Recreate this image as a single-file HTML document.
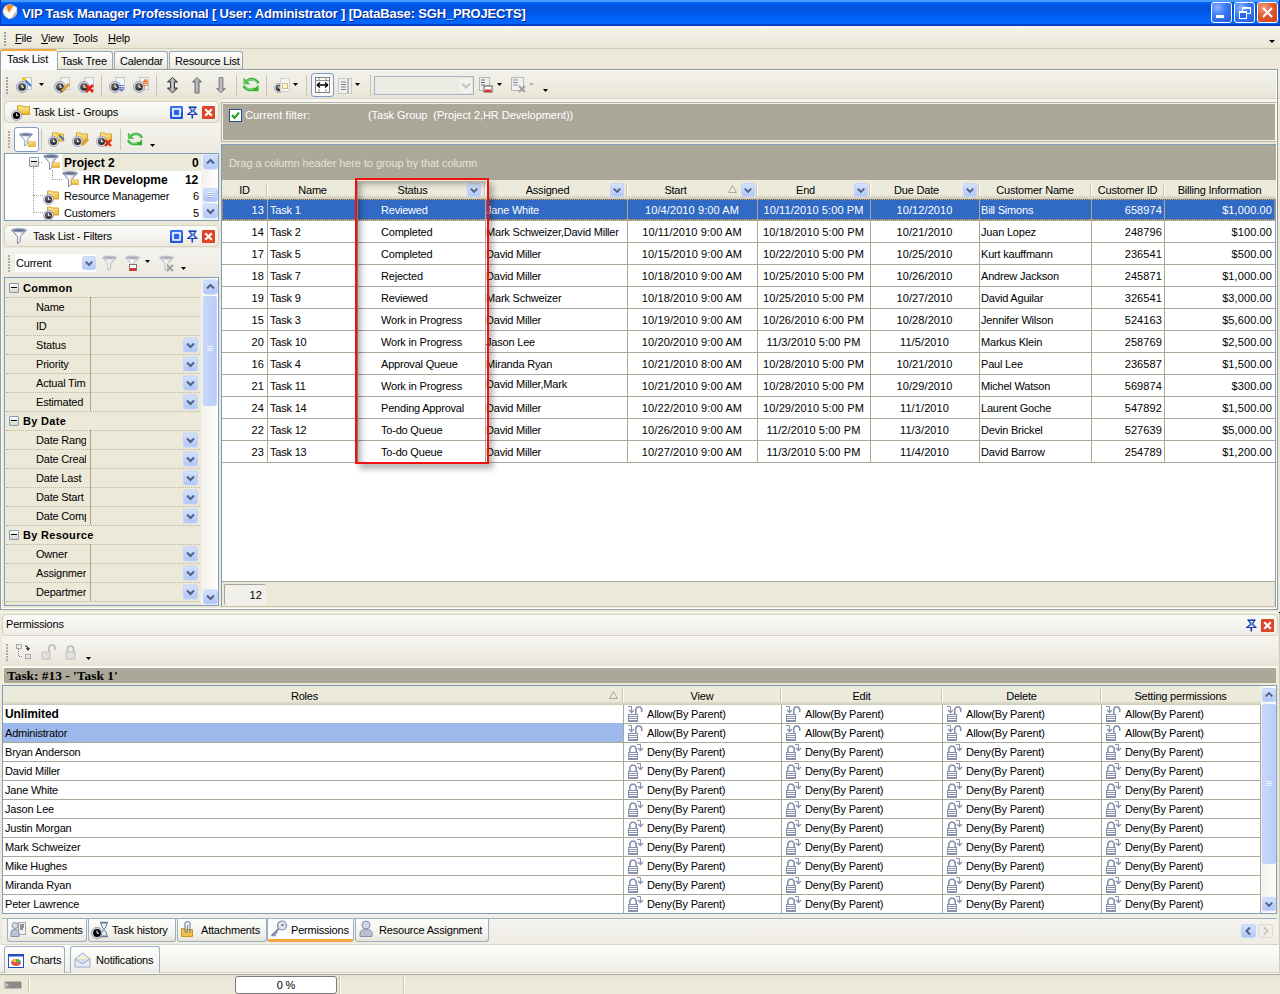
<!DOCTYPE html><html><head><meta charset="utf-8"><style>
*{margin:0;padding:0;box-sizing:border-box}
html,body{width:1280px;height:994px;overflow:hidden}
body{position:relative;background:#ECE9D8;font-family:"Liberation Sans",sans-serif;font-size:11px;color:#000;letter-spacing:-0.2px}
.t{position:absolute;white-space:nowrap;line-height:13px}
.a{position:absolute}
svg{position:absolute;overflow:visible}
</style></head><body>
<div style="position:absolute;left:0px;top:0px;width:1280px;height:26px;background:linear-gradient(to bottom,#4A9BFF 0px,#4696FF 2px,#0A6CFF 2px,#0060F0 3px,#0056E2 5px,#0053DF 8px,#0056E6 12px,#005FF4 16px,#0065FD 20px,#0066FF 24px,#0040CC 24px,#0038C0 26px)"></div>
<div style="position:absolute;left:1279px;top:0px;width:1px;height:26px;background:#0036B8"></div>
<div style="position:absolute;left:0px;top:0px;width:1px;height:26px;background:#0040C8"></div>
<svg style="left:0px;top:0px" width="20" height="20"><defs><clipPath id="icc"><circle cx="10" cy="11.5" r="7"/></clipPath></defs><circle cx="10" cy="11.5" r="7" fill="#F2F2F2" stroke="#E8B070" stroke-width="0.6"/><g clip-path="url(#icc)"><path d="M2 3 H14 L9 12 L2 7 Z" fill="#F6D6AE"/><path d="M6.5 5.5 L14 4.5 L9 12.5 Z" fill="#EE8A1C"/><path d="M10.5 19 L18 9.5 V19 Z" fill="#B0B0B0"/></g><path d="M3.8 10.2 L9 16.8 L16.2 7.2" stroke="#fff" stroke-width="3" fill="none"/></svg>
<div class="t" style="left:22px;top:6px;font-weight:bold;font-size:13px;line-height:15px;color:#fff;letter-spacing:-0.18px;text-shadow:1px 1px 0 #0A1E80">VIP Task Manager Professional [ User: Administrator ] [DataBase: SGH_PROJECTS]</div>
<div style="position:absolute;left:1211px;top:2px;width:21px;height:21px;border:1px solid #fff;border-radius:3px;background:radial-gradient(circle at 30% 25%,#8FB4FF 0%,#3C7DF8 40%,#2257E0 100%)"></div>
<div style="position:absolute;left:1216px;top:15px;width:8px;height:3px;background:#fff"></div>
<div style="position:absolute;left:1234px;top:2px;width:21px;height:21px;border:1px solid #fff;border-radius:3px;background:radial-gradient(circle at 30% 25%,#8FB4FF 0%,#3C7DF8 40%,#2257E0 100%)"></div>
<svg style="left:1238px;top:6px" width="14" height="14"><rect x="4.5" y="1.5" width="8" height="6" fill="none" stroke="#fff" stroke-width="1"/><rect x="4" y="1" width="9" height="2" fill="#fff"/><rect x="1.5" y="5.5" width="7" height="7" fill="#2E66E8" stroke="#fff" stroke-width="1"/><rect x="1" y="5" width="8" height="2" fill="#fff"/></svg>
<div style="position:absolute;left:1257px;top:2px;width:21px;height:21px;border:1px solid #fff;border-radius:3px;background:radial-gradient(circle at 30% 25%,#F0A080 0%,#E25A30 45%,#C8401A 100%)"></div>
<svg style="left:1261px;top:6px" width="14" height="14"><path d="M2 2 L11 11 M11 2 L2 11" stroke="#fff" stroke-width="2"/></svg>
<div style="position:absolute;left:0px;top:26px;width:1280px;height:23px;background:linear-gradient(to bottom,#F5F4EC,#EEEBDF 70%,#E7E3D1)"></div>
<div style="position:absolute;left:0px;top:48px;width:1280px;height:1px;background:#D0CCBA"></div>
<div style="position:absolute;left:4px;top:32px;width:2px;height:2px;background:#A8A49A"></div>
<div style="position:absolute;left:4px;top:35px;width:2px;height:2px;background:#A8A49A"></div>
<div style="position:absolute;left:4px;top:38px;width:2px;height:2px;background:#A8A49A"></div>
<div style="position:absolute;left:4px;top:41px;width:2px;height:2px;background:#A8A49A"></div>
<div style="position:absolute;left:4px;top:44px;width:2px;height:2px;background:#A8A49A"></div>
<div class="t" style="left:15px;top:32px;"><u>F</u>ile</div>
<div class="t" style="left:41px;top:32px;"><u>V</u>iew</div>
<div class="t" style="left:73px;top:32px;"><u>T</u>ools</div>
<div class="t" style="left:108px;top:32px;"><u>H</u>elp</div>
<svg style="left:1269px;top:40px" width="7" height="4"><path d="M0 0 H6 L3 3 Z" fill="#000"/></svg>
<div style="position:absolute;left:0px;top:49px;width:1280px;height:22px;background:#ECE9D8"></div>
<div style="position:absolute;left:0px;top:49px;width:57px;height:22px;background:#FCFCFE;border-left:1px solid #919B9C;border-top:2px solid #F1A640;border-radius:3px 3px 0 0"></div><div class="t" style="left:7px;top:53px;">Task List</div>
<div style="position:absolute;left:57px;top:51px;width:56px;height:19px;background:linear-gradient(to bottom,#FEFEFE,#F1F0EA 60%,#E4E2D6);border:1px solid #97A5B5;border-bottom:none;border-radius:3px 3px 0 0"></div><div class="t" style="left:61px;top:55px;">Task Tree</div>
<div style="position:absolute;left:114px;top:51px;width:54px;height:19px;background:linear-gradient(to bottom,#FEFEFE,#F1F0EA 60%,#E4E2D6);border:1px solid #97A5B5;border-bottom:none;border-radius:3px 3px 0 0"></div><div class="t" style="left:120px;top:55px;">Calendar</div>
<div style="position:absolute;left:169px;top:51px;width:74px;height:19px;background:linear-gradient(to bottom,#FEFEFE,#F1F0EA 60%,#E4E2D6);border:1px solid #97A5B5;border-bottom:none;border-radius:3px 3px 0 0"></div><div class="t" style="left:175px;top:55px;">Resource List</div>
<div style="position:absolute;left:0px;top:70px;width:1280px;height:29px;background:linear-gradient(to bottom,#F2F1EA,#EEECE2 55%,#E7E4D4)"></div>
<div style="position:absolute;left:0px;top:98px;width:1280px;height:1px;background:#D8D4C4"></div>
<div style="position:absolute;left:0px;top:99px;width:1280px;height:3px;background:#F7F6F1"></div>
<div style="position:absolute;left:6px;top:77px;width:2px;height:2px;background:#A8A49A"></div>
<div style="position:absolute;left:6px;top:80px;width:2px;height:2px;background:#A8A49A"></div>
<div style="position:absolute;left:6px;top:83px;width:2px;height:2px;background:#A8A49A"></div>
<div style="position:absolute;left:6px;top:86px;width:2px;height:2px;background:#A8A49A"></div>
<div style="position:absolute;left:6px;top:89px;width:2px;height:2px;background:#A8A49A"></div>
<div style="position:absolute;left:6px;top:92px;width:2px;height:2px;background:#A8A49A"></div>
<div style="position:absolute;left:101px;top:75px;width:1px;height:21px;background:#C9C5B2"></div>
<div style="position:absolute;left:156px;top:75px;width:1px;height:21px;background:#C9C5B2"></div>
<div style="position:absolute;left:236px;top:75px;width:1px;height:21px;background:#C9C5B2"></div>
<div style="position:absolute;left:266px;top:75px;width:1px;height:21px;background:#C9C5B2"></div>
<div style="position:absolute;left:306px;top:75px;width:1px;height:21px;background:#C9C5B2"></div>
<div style="position:absolute;left:370px;top:75px;width:1px;height:21px;background:#C9C5B2"></div>
<svg width="0" height="0" style="position:absolute"><defs>
<radialGradient id="gclk" cx="0.4" cy="0.35" r="0.7"><stop offset="0" stop-color="#707070"/><stop offset="1" stop-color="#1A1A1A"/></radialGradient>
<linearGradient id="gfold" x1="0" y1="0" x2="0" y2="1"><stop offset="0" stop-color="#FFE9A0"/><stop offset="1" stop-color="#E8B830"/></linearGradient>
<linearGradient id="gfun" x1="0" y1="0" x2="1" y2="0"><stop offset="0" stop-color="#C8D0E0"/><stop offset="0.45" stop-color="#FFFFFF"/><stop offset="1" stop-color="#B0B8CC"/></linearGradient>
<linearGradient id="gdd" x1="0" y1="0" x2="0" y2="1"><stop offset="0" stop-color="#D6E2FC"/><stop offset="1" stop-color="#AFC6F6"/></linearGradient>
<linearGradient id="garr" x1="0" y1="0" x2="1" y2="0"><stop offset="0" stop-color="#5A5A5A"/><stop offset="0.5" stop-color="#C8C8C8"/><stop offset="1" stop-color="#4A4A4A"/></linearGradient>
<symbol id="clock" viewBox="0 0 12 12"><circle cx="6" cy="6" r="5.5" fill="#D8DCE6" stroke="#9AA0B8" stroke-width="1"/><circle cx="6" cy="6" r="3.8" fill="url(#gclk)"/><path d="M6 3.5 V6.2 H8" stroke="#fff" stroke-width="1" fill="none"/></symbol>
<symbol id="clockb" viewBox="0 0 12 12"><circle cx="6" cy="6" r="5.5" fill="#D8DCE6" stroke="#9AA0B8" stroke-width="1"/><circle cx="6" cy="6" r="3.9" fill="#000"/><path d="M6 3.5 V6.2 H8" stroke="#fff" stroke-width="1" fill="none"/></symbol>
<symbol id="folder" viewBox="0 0 12 10"><path d="M0.5 1.5 H4.5 L5.5 2.5 H11.5 V9.5 H0.5 Z" fill="url(#gfold)" stroke="#D9A520" stroke-width="1"/></symbol>
<symbol id="doc" viewBox="0 0 10 13"><rect x="0.5" y="0.5" width="9" height="12" fill="#F4F4F4" stroke="#C8C8C8"/></symbol>
<symbol id="funnel" viewBox="0 0 16 16"><path d="M0.8 2.2 L6.5 8.8 V15.5 L9.2 13.5 V8.8 L15.2 2.2 Z" fill="url(#gfun)" stroke="#6E7C9C" stroke-width="0.9"/><path d="M7.6 9 V14" stroke="#FFFFFF" stroke-width="0.9"/><ellipse cx="8" cy="2.2" rx="7.3" ry="1.6" fill="#9AA4BC" stroke="#6E7C9C" stroke-width="0.6"/><ellipse cx="8" cy="2.4" rx="5" ry="0.8" fill="#5E6A88"/></symbol>
<symbol id="dd" viewBox="0 0 15 15"><rect x="0.5" y="0.5" width="14" height="14" rx="2" fill="url(#gdd)" stroke="#C3D3FD"/><path d="M4 6 L7.5 9.5 L11 6" stroke="#4D6185" stroke-width="2" fill="none"/></symbol>
<symbol id="ddu" viewBox="0 0 15 15"><rect x="0.5" y="0.5" width="14" height="14" rx="2" fill="url(#gdd)" stroke="#C3D3FD"/><path d="M4 9 L7.5 5.5 L11 9" stroke="#4D6185" stroke-width="2" fill="none"/></symbol>
<symbol id="refresh" viewBox="0 0 17 17"><path d="M15.8 7.2 A7 6.2 0 0 0 4.5 4.8" stroke="#30B030" stroke-width="2.6" fill="none"/><path d="M15 6.6 A7 6.2 0 0 0 5.5 4.2" stroke="#A8EAA8" stroke-width="0.7" fill="none"/><path d="M1 1.8 V8.2 H7.4 Z" fill="#30B030"/><path d="M2 4.5 V7.2 H4.7" stroke="#A8EAA8" stroke-width="0.7" fill="none"/><path d="M1.2 9.8 A7 6.2 0 0 0 12.5 12.2" stroke="#30B030" stroke-width="2.6" fill="none"/><path d="M2 10.4 A7 6.2 0 0 0 11.5 12.8" stroke="#A8EAA8" stroke-width="0.7" fill="none"/><path d="M16 8.8 V15.2 H9.6 Z" fill="#30B030"/></symbol>
<symbol id="xred" viewBox="0 0 12 12"><rect x="0" y="0" width="12" height="12" rx="1.5" fill="#E0462A" stroke="#C43A20" stroke-width="0.5"/><path d="M3 3 L9 9 M9 3 L3 9" stroke="#fff" stroke-width="2"/></symbol>
<symbol id="bsq" viewBox="0 0 13 13"><rect x="0" y="0" width="13" height="13" rx="1.5" fill="#1D54E4"/><rect x="0.5" y="0.5" width="12" height="6" rx="1" fill="#3C78F4"/><rect x="3" y="3" width="7" height="7" fill="#2A64EC" stroke="#fff" stroke-width="1.6"/></symbol>
<symbol id="pin" viewBox="0 0 12 13"><path d="M2.5 1.2 H10.5" stroke="#1C3CB8" stroke-width="1.6"/><path d="M3.5 1.5 L6 5.2 L1.5 8.5 H11 L7.5 5.2 L9.5 1.5 Z" fill="#D8E2FA" stroke="#1C3CB8" stroke-width="1.2" stroke-linejoin="round"/><circle cx="7" cy="4.5" r="1.2" fill="#4A8AE0"/><path d="M6.3 8.5 V12.5" stroke="#1C3CB8" stroke-width="1.6"/></symbol>
<symbol id="lockopen" viewBox="0 0 16 16"><rect x="0" y="8" width="10" height="8" fill="#8790AC"/><rect x="1" y="9" width="8" height="1" fill="#fff"/><rect x="1" y="11" width="8" height="1" fill="#fff"/><rect x="1" y="13" width="8" height="1" fill="#fff"/><path d="M7.8 8 V3 L9.3 1 H12.2 L13.7 3 V6" stroke="#8790AC" stroke-width="1.6" fill="none"/><path d="M0 0.5 H3.5 V6" stroke="#8790AC" stroke-width="1" fill="none"/><path d="M1 4 L3.5 6.5 L6 4" stroke="#8790AC" stroke-width="1.3" fill="none"/></symbol>
<symbol id="lockdeny" viewBox="0 0 16 16"><rect x="0" y="8" width="10" height="8" fill="#8790AC"/><rect x="1" y="9" width="8" height="1" fill="#fff"/><rect x="1" y="11" width="8" height="1" fill="#fff"/><rect x="1" y="13" width="8" height="1" fill="#fff"/><path d="M1.8 8 V4.5 L3.5 2.3 H6.5 L8.2 4.5 V8" stroke="#8790AC" stroke-width="1.6" fill="none"/><path d="M9 0.5 H12.5 V6.5" stroke="#8790AC" stroke-width="1" fill="none"/><path d="M10 4 L12.5 6.5 L15 4" stroke="#8790AC" stroke-width="1.3" fill="none"/></symbol>
</defs></svg>
<svg style="left:22px;top:77px;" width="10" height="13"><use href="#doc" width="10" height="13"/></svg><svg style="left:16px;top:81px;" width="12" height="12"><use href="#clock" width="12" height="12"/></svg>
<svg style="left:22px;top:77px" width="10" height="10"><path d="M1 1 L9 9" stroke="#3A78D8" stroke-width="2"/><circle cx="2" cy="2" r="2" fill="#F8D020"/></svg>
<svg style="left:39px;top:83px" width="6" height="4"><path d="M0 0 H5 L2.5 3 Z" fill="#000"/></svg>
<svg style="left:60px;top:77px;" width="10" height="13"><use href="#doc" width="10" height="13"/></svg><svg style="left:54px;top:81px;" width="12" height="12"><use href="#clock" width="12" height="12"/></svg>
<svg style="left:60px;top:83px" width="10" height="10"><path d="M9 1 L2 8" stroke="#E0A030" stroke-width="3"/><path d="M2 8 L1 9" stroke="#333" stroke-width="1.5"/></svg>
<svg style="left:84px;top:77px;" width="10" height="13"><use href="#doc" width="10" height="13"/></svg><svg style="left:78px;top:81px;" width="12" height="12"><use href="#clock" width="12" height="12"/></svg>
<svg style="left:85px;top:84px" width="9" height="9"><path d="M1 1 L8 8 M8 1 L1 8" stroke="#E02818" stroke-width="2.6"/></svg>
<svg style="left:115px;top:77px;" width="10" height="13"><use href="#doc" width="10" height="13"/></svg><svg style="left:109px;top:81px;" width="12" height="12"><use href="#clock" width="12" height="12"/></svg>
<svg style="left:119px;top:85px" width="6" height="7"><path d="M0 0.5 H5 M0 2.5 H5 M0 4 L2.5 6.5 L5 4Z" stroke="#6A7FE0" stroke-width="1" fill="#6A7FE0"/></svg>
<svg style="left:139px;top:77px;" width="10" height="13"><use href="#doc" width="10" height="13"/></svg><svg style="left:133px;top:81px;" width="12" height="12"><use href="#clock" width="12" height="12"/></svg>
<svg style="left:143px;top:79px" width="6" height="8"><path d="M0 3 L2.5 0 L5 3Z M0 4.5 H5 M0 6.5 H5" stroke="#F07830" stroke-width="1" fill="#F07830"/></svg>
<svg style="left:167px;top:77px" width="11" height="17"><path d="M5.5 0.5 L10.5 5 H7.5 V11 H10.5 L5.5 16 L0.5 11 H3.5 V5 H0.5 Z" fill="url(#garr)" stroke="#3A3A3A" stroke-width="1"/></svg>
<svg style="left:192px;top:77px" width="10" height="17"><path d="M5 0.5 L9.5 5 H7 V16 H3 V5 H0.5 Z" fill="url(#garr)" stroke="#707070" stroke-width="1"/></svg>
<svg style="left:216px;top:77px" width="10" height="17"><path d="M3 0.5 H7 V11.5 H9.5 L5 16 L0.5 11.5 H3 Z" fill="url(#garr)" stroke="#8A8A8A" stroke-width="1"/></svg>
<svg style="left:242px;top:76px;" width="18" height="17"><use href="#refresh" width="18" height="17"/></svg>
<svg style="left:274px;top:83px;" width="10" height="10"><use href="#clock" width="10" height="10"/></svg><div style="position:absolute;left:280px;top:78px;width:10px;height:14px;background:#F4F4F4;border:1px solid #D0D0D0"></div><div style="position:absolute;left:282px;top:83px;width:6px;height:6px;background:#FFF6C8;border:1px solid #C8C090"></div>
<svg style="left:293px;top:83px" width="6" height="4"><path d="M0 0 H5 L2.5 3 Z" fill="#000"/></svg>
<div style="position:absolute;left:311px;top:73px;width:23px;height:24px;background:#F8F8F8;border:1px solid #7E9CC8;border-radius:3px"></div>
<svg style="left:314px;top:77px" width="17" height="16"><rect x="1.5" y="0.5" width="14" height="15" fill="#fff" stroke="#808080"/><path d="M1.5 3.5 H15.5 M5 0.5 V3.5 M12 0.5 V3.5 M5 12 V15.5 M12 12 V15.5" stroke="#909090"/><path d="M3 8 H14 M3 8 L6 5.5 M3 8 L6 10.5 M14 8 L11 5.5 M14 8 L11 10.5" stroke="#000" stroke-width="1.4" fill="none"/></svg>
<svg style="left:338px;top:78px" width="14" height="16"><rect x="0.5" y="0.5" width="13" height="15" fill="#F0F0F0" stroke="#C8C8C8"/><path d="M3 4 H8 M3 6.5 H8 M3 9 H8 M3 11.5 H8 M10 1 V15" stroke="#808080"/></svg>
<svg style="left:355px;top:83px" width="6" height="4"><path d="M0 0 H5 L2.5 3 Z" fill="#000"/></svg>
<div style="position:absolute;left:374px;top:76px;width:100px;height:19px;background:#EBEBE4;border:1px solid #A7B4C8"></div>
<div style="position:absolute;left:458px;top:77px;width:15px;height:17px;background:#F2F1EC;border:1px solid #E6E4DC;border-radius:2px"></div>
<svg style="left:459px;top:78px" width="14" height="15"><path d="M3 5.5 L7 9.5 L11 5.5" stroke="#C4C4C0" stroke-width="2" fill="none"/></svg>
<svg style="left:479px;top:77px" width="14" height="16"><rect x="0.5" y="0.5" width="10" height="13" fill="#F0F0F0" stroke="#B8B8B8"/><path d="M2 3 H6 M2 5.5 H6 M2 8 H6" stroke="#707070"/><rect x="5" y="9" width="8" height="6" fill="#fff" stroke="#555"/><rect x="6" y="12.5" width="6" height="2.5" fill="#E03030"/></svg>
<svg style="left:497px;top:83px" width="6" height="4"><path d="M0 0 H5 L2.5 3 Z" fill="#000"/></svg>
<svg style="left:511px;top:77px" width="16" height="16"><rect x="0.5" y="0.5" width="12" height="13" fill="#F0F0F0" stroke="#B8B8B8"/><path d="M2 3 H7 M2 5.5 H7 M2 8 H7" stroke="#909090"/><path d="M8 9 L14 15 M14 9 L8 15" stroke="#A0A0A0" stroke-width="2"/></svg>
<svg style="left:529px;top:83px" width="6" height="4"><path d="M0 0 H5 L2.5 3 Z" fill="#B0B0B0"/></svg>
<svg style="left:543px;top:89px" width="6" height="4"><path d="M0 0 H5 L2.5 3 Z" fill="#000"/></svg>
<div style="position:absolute;left:1px;top:98px;width:220px;height:512px;background:#ECE9D8"></div>
<div style="position:absolute;left:4px;top:101px;width:215px;height:22px;background:linear-gradient(to bottom,#FCFCFA,#F3F2EC 60%,#EAE8DE);border:1px solid #D5D2C2;border-radius:5px"></div><svg style="left:17px;top:104px;" width="13" height="11"><use href="#folder" width="13" height="11"/></svg><svg style="left:11px;top:110px;" width="11" height="11"><use href="#clockb" width="11" height="11"/></svg><div class="t" style="left:33px;top:106px;">Task List - Groups</div>
<svg style="left:170px;top:106px;" width="13" height="13"><use href="#bsq" width="13" height="13"/></svg><svg style="left:186px;top:106px;" width="12" height="13"><use href="#pin" width="12" height="13"/></svg><svg style="left:202px;top:106px;" width="13" height="13"><use href="#xred" width="13" height="13"/></svg>
<div style="position:absolute;left:4px;top:123px;width:216px;height:30px;background:linear-gradient(to bottom,#F4F3EE,#ECEAE0)"></div>
<div style="position:absolute;left:8px;top:131px;width:2px;height:2px;background:#B0AC9E"></div><div style="position:absolute;left:8px;top:134px;width:2px;height:2px;background:#B0AC9E"></div><div style="position:absolute;left:8px;top:137px;width:2px;height:2px;background:#B0AC9E"></div><div style="position:absolute;left:8px;top:140px;width:2px;height:2px;background:#B0AC9E"></div><div style="position:absolute;left:8px;top:143px;width:2px;height:2px;background:#B0AC9E"></div><div style="position:absolute;left:8px;top:146px;width:2px;height:2px;background:#B0AC9E"></div>
<div style="position:absolute;left:14px;top:127px;width:25px;height:25px;background:#fff;border:1px solid #7E9CC8;border-radius:3px"></div>
<svg style="left:19px;top:132px;" width="14" height="15"><use href="#funnel" width="14" height="15"/></svg><svg style="left:28px;top:140px;" width="8" height="7"><use href="#folder" width="8" height="7"/></svg>
<div style="position:absolute;left:41px;top:129px;width:1px;height:21px;background:#C9C5B2"></div>
<svg style="left:52px;top:131px;" width="12" height="11"><use href="#folder" width="12" height="11"/></svg><svg style="left:48px;top:136px;" width="11" height="11"><use href="#clock" width="11" height="11"/></svg>
<svg style="left:56px;top:132px" width="9" height="9"><path d="M1 1 L8 8" stroke="#3A78D8" stroke-width="2"/><circle cx="2" cy="2" r="1.8" fill="#F8D020"/></svg>
<svg style="left:76px;top:131px;" width="12" height="11"><use href="#folder" width="12" height="11"/></svg><svg style="left:72px;top:136px;" width="11" height="11"><use href="#clock" width="11" height="11"/></svg>
<svg style="left:80px;top:138px" width="9" height="9"><path d="M8 1 L2 7" stroke="#E0A030" stroke-width="3"/></svg>
<svg style="left:100px;top:131px;" width="12" height="11"><use href="#folder" width="12" height="11"/></svg><svg style="left:96px;top:136px;" width="11" height="11"><use href="#clock" width="11" height="11"/></svg>
<svg style="left:104px;top:139px" width="8" height="8"><path d="M1 1 L7 7 M7 1 L1 7" stroke="#E02818" stroke-width="2.4"/></svg>
<div style="position:absolute;left:120px;top:129px;width:1px;height:21px;background:#C9C5B2"></div>
<svg style="left:127px;top:131px;" width="16" height="16"><use href="#refresh" width="16" height="16"/></svg>
<svg style="left:150px;top:144px" width="6" height="4"><path d="M0 0 H5 L2.5 3 Z" fill="#000"/></svg>
<div style="position:absolute;left:4px;top:153px;width:215px;height:68px;background:#fff;border:1px solid #7F9DB9"></div>
<div style="position:absolute;left:62px;top:154px;width:140px;height:17px;background:#ECE9D8"></div>
<div style="position:absolute;left:39px;top:162px;width:3px;height:1px;border-top:1px dotted #A0A0A0"></div>
<div style="position:absolute;left:33px;top:167px;width:1px;height:46px;border-left:1px dotted #A0A0A0"></div>
<div style="position:absolute;left:33px;top:195px;width:10px;height:1px;border-top:1px dotted #A0A0A0"></div>
<div style="position:absolute;left:33px;top:212px;width:10px;height:1px;border-top:1px dotted #A0A0A0"></div>
<div style="position:absolute;left:52px;top:170px;width:1px;height:10px;border-left:1px dotted #A0A0A0"></div>
<div style="position:absolute;left:52px;top:179px;width:10px;height:1px;border-top:1px dotted #A0A0A0"></div>
<div style="position:absolute;left:29px;top:157px;width:10px;height:10px;background:linear-gradient(#fff,#D8D4C8);border:1px solid #7F9DB9;border-radius:1px"></div>
<div style="position:absolute;left:31px;top:161px;width:6px;height:1px;background:#000"></div>
<svg style="left:43px;top:154px;" width="16" height="16"><use href="#funnel" width="16" height="16"/></svg><svg style="left:52px;top:161px;" width="8" height="7"><use href="#folder" width="8" height="7"/></svg>
<div class="t" style="left:64px;top:157px;font-weight:bold;font-size:12px;letter-spacing:0px">Project 2</div>
<div class="t" style="left:192px;top:157px;font-weight:bold;font-size:12px">0</div>
<svg style="left:62px;top:171px;" width="16" height="16"><use href="#funnel" width="16" height="16"/></svg><svg style="left:71px;top:178px;" width="8" height="7"><use href="#folder" width="8" height="7"/></svg>
<div class="t" style="left:83px;top:174px;font-weight:bold;font-size:12px;letter-spacing:0px">HR Developme</div>
<div class="t" style="left:185px;top:174px;font-weight:bold;font-size:12px">12</div>
<svg style="left:47px;top:189px;" width="12" height="11"><use href="#folder" width="12" height="11"/></svg><svg style="left:43px;top:194px;" width="11" height="11"><use href="#clock" width="11" height="11"/></svg>
<div class="t" style="left:64px;top:190px;">Resource Managemer</div>
<div class="t" style="left:193px;top:190px;">6</div>
<svg style="left:47px;top:205px;" width="12" height="11"><use href="#folder" width="12" height="11"/></svg><svg style="left:43px;top:210px;" width="11" height="11"><use href="#clock" width="11" height="11"/></svg>
<div class="t" style="left:64px;top:207px;">Customers</div>
<div class="t" style="left:193px;top:207px;">5</div>
<div style="position:absolute;left:201px;top:154px;width:17px;height:66px;background:linear-gradient(to right,#F3F1EC,#FEFEFB)"></div>
<svg style="left:203px;top:154px;" width="15" height="16"><use href="#ddu" width="15" height="16"/></svg>
<svg style="left:203px;top:203px;" width="15" height="16"><use href="#dd" width="15" height="16"/></svg>
<svg style="left:203px;top:188px" width="15" height="14"><rect x="0.5" y="0.5" width="14" height="13" rx="2" fill="url(#gdd)" stroke="#C3D3FD"/><path d="M4 4.5 H11 M4 6.5 H11 M4 8.5 H11" stroke="#EEF2FD" stroke-width="1"/><path d="M4 5.5 H11 M4 7.5 H11 M4 9.5 H11" stroke="#8CA6E0" stroke-width="0.6"/></svg>
<div style="position:absolute;left:4px;top:225px;width:215px;height:22px;background:linear-gradient(to bottom,#FCFCFA,#F3F2EC 60%,#EAE8DE);border:1px solid #D5D2C2;border-radius:5px"></div><svg style="left:11px;top:228px;" width="16" height="16"><use href="#funnel" width="16" height="16"/></svg><div class="t" style="left:33px;top:230px;">Task List - Filters</div>
<svg style="left:170px;top:230px;" width="13" height="13"><use href="#bsq" width="13" height="13"/></svg><svg style="left:186px;top:230px;" width="12" height="13"><use href="#pin" width="12" height="13"/></svg><svg style="left:202px;top:230px;" width="13" height="13"><use href="#xred" width="13" height="13"/></svg>
<div style="position:absolute;left:4px;top:248px;width:216px;height:29px;background:linear-gradient(to bottom,#F4F3EE,#ECEAE0)"></div>
<div style="position:absolute;left:8px;top:255px;width:2px;height:2px;background:#B0AC9E"></div><div style="position:absolute;left:8px;top:258px;width:2px;height:2px;background:#B0AC9E"></div><div style="position:absolute;left:8px;top:261px;width:2px;height:2px;background:#B0AC9E"></div><div style="position:absolute;left:8px;top:264px;width:2px;height:2px;background:#B0AC9E"></div><div style="position:absolute;left:8px;top:267px;width:2px;height:2px;background:#B0AC9E"></div><div style="position:absolute;left:8px;top:270px;width:2px;height:2px;background:#B0AC9E"></div>
<div style="position:absolute;left:15px;top:254px;width:81px;height:18px;background:#fff"></div>
<div class="t" style="left:16px;top:257px;">Current</div>
<svg style="left:82px;top:255px;" width="14" height="16"><use href="#dd" width="14" height="16"/></svg>
<svg style="left:102px;top:255px;opacity:0.55" width="15" height="16"><use href="#funnel" width="15" height="16"/></svg>
<svg style="left:125px;top:255px;opacity:0.55" width="15" height="16"><use href="#funnel" width="15" height="16"/></svg>
<div style="position:absolute;left:129px;top:264px;width:8px;height:7px;background:#fff;border:1px solid #777"></div><div style="position:absolute;left:130px;top:268px;width:6px;height:3px;background:#E03030"></div>
<svg style="left:145px;top:260px" width="6" height="4"><path d="M0 0 H5 L2.5 3 Z" fill="#000"/></svg>
<svg style="left:159px;top:255px;opacity:0.55" width="15" height="16"><use href="#funnel" width="15" height="16"/></svg>
<svg style="left:166px;top:264px" width="8" height="8"><path d="M1 1 L7 7 M7 1 L1 7" stroke="#A0A0A0" stroke-width="2"/></svg>
<svg style="left:181px;top:267px" width="6" height="4"><path d="M0 0 H5 L2.5 3 Z" fill="#000"/></svg>
<div style="position:absolute;left:4px;top:277px;width:215px;height:329px;background:#ECE9D8;border:1px solid #7F9DB9"></div>
<div style="position:absolute;left:9px;top:283px;width:10px;height:10px;background:linear-gradient(#fff,#D8D4C8);border:1px solid #7F9DB9;border-radius:1px"></div>
<div style="position:absolute;left:11px;top:287px;width:6px;height:1px;background:#000"></div>
<div class="t" style="left:23px;top:282px;font-weight:bold;font-size:11px;letter-spacing:0.3px">Common</div>
<div style="position:absolute;left:6px;top:297px;width:196px;height:1px;border-top:1px dotted #B8B4A0"></div>
<div style="position:absolute;left:90px;top:297px;width:1px;height:19px;background:#A8A490"></div>
<div style="position:absolute;left:6px;top:297px;width:80px;height:19px;overflow:hidden"><div class="t" style="left:30px;top:4px;">Name</div></div>
<div style="position:absolute;left:6px;top:316px;width:196px;height:1px;border-top:1px dotted #B8B4A0"></div>
<div style="position:absolute;left:90px;top:316px;width:1px;height:19px;background:#A8A490"></div>
<div style="position:absolute;left:6px;top:316px;width:80px;height:19px;overflow:hidden"><div class="t" style="left:30px;top:4px;">ID</div></div>
<div style="position:absolute;left:6px;top:335px;width:196px;height:1px;border-top:1px dotted #B8B4A0"></div>
<div style="position:absolute;left:90px;top:335px;width:1px;height:19px;background:#A8A490"></div>
<div style="position:absolute;left:6px;top:335px;width:80px;height:19px;overflow:hidden"><div class="t" style="left:30px;top:4px;">Status</div></div>
<svg style="left:183px;top:337px;" width="15" height="16"><use href="#dd" width="15" height="16"/></svg>
<div style="position:absolute;left:6px;top:354px;width:196px;height:1px;border-top:1px dotted #B8B4A0"></div>
<div style="position:absolute;left:90px;top:354px;width:1px;height:19px;background:#A8A490"></div>
<div style="position:absolute;left:6px;top:354px;width:80px;height:19px;overflow:hidden"><div class="t" style="left:30px;top:4px;">Priority</div></div>
<svg style="left:183px;top:356px;" width="15" height="16"><use href="#dd" width="15" height="16"/></svg>
<div style="position:absolute;left:6px;top:373px;width:196px;height:1px;border-top:1px dotted #B8B4A0"></div>
<div style="position:absolute;left:90px;top:373px;width:1px;height:19px;background:#A8A490"></div>
<div style="position:absolute;left:6px;top:373px;width:80px;height:19px;overflow:hidden"><div class="t" style="left:30px;top:4px;">Actual Tim</div></div>
<svg style="left:183px;top:375px;" width="15" height="16"><use href="#dd" width="15" height="16"/></svg>
<div style="position:absolute;left:6px;top:392px;width:196px;height:1px;border-top:1px dotted #B8B4A0"></div>
<div style="position:absolute;left:90px;top:392px;width:1px;height:19px;background:#A8A490"></div>
<div style="position:absolute;left:6px;top:392px;width:80px;height:19px;overflow:hidden"><div class="t" style="left:30px;top:4px;">Estimated</div></div>
<svg style="left:183px;top:394px;" width="15" height="16"><use href="#dd" width="15" height="16"/></svg>
<div style="position:absolute;left:6px;top:411px;width:196px;height:1px;border-top:1px dotted #B8B4A0"></div>
<div style="position:absolute;left:9px;top:416px;width:10px;height:10px;background:linear-gradient(#fff,#D8D4C8);border:1px solid #7F9DB9;border-radius:1px"></div>
<div style="position:absolute;left:11px;top:420px;width:6px;height:1px;background:#000"></div>
<div class="t" style="left:23px;top:415px;font-weight:bold;font-size:11px;letter-spacing:0.3px">By Date</div>
<div style="position:absolute;left:6px;top:430px;width:196px;height:1px;border-top:1px dotted #B8B4A0"></div>
<div style="position:absolute;left:90px;top:430px;width:1px;height:19px;background:#A8A490"></div>
<div style="position:absolute;left:6px;top:430px;width:80px;height:19px;overflow:hidden"><div class="t" style="left:30px;top:4px;">Date Rang</div></div>
<svg style="left:183px;top:432px;" width="15" height="16"><use href="#dd" width="15" height="16"/></svg>
<div style="position:absolute;left:6px;top:449px;width:196px;height:1px;border-top:1px dotted #B8B4A0"></div>
<div style="position:absolute;left:90px;top:449px;width:1px;height:19px;background:#A8A490"></div>
<div style="position:absolute;left:6px;top:449px;width:80px;height:19px;overflow:hidden"><div class="t" style="left:30px;top:4px;">Date Creal</div></div>
<svg style="left:183px;top:451px;" width="15" height="16"><use href="#dd" width="15" height="16"/></svg>
<div style="position:absolute;left:6px;top:468px;width:196px;height:1px;border-top:1px dotted #B8B4A0"></div>
<div style="position:absolute;left:90px;top:468px;width:1px;height:19px;background:#A8A490"></div>
<div style="position:absolute;left:6px;top:468px;width:80px;height:19px;overflow:hidden"><div class="t" style="left:30px;top:4px;">Date Last</div></div>
<svg style="left:183px;top:470px;" width="15" height="16"><use href="#dd" width="15" height="16"/></svg>
<div style="position:absolute;left:6px;top:487px;width:196px;height:1px;border-top:1px dotted #B8B4A0"></div>
<div style="position:absolute;left:90px;top:487px;width:1px;height:19px;background:#A8A490"></div>
<div style="position:absolute;left:6px;top:487px;width:80px;height:19px;overflow:hidden"><div class="t" style="left:30px;top:4px;">Date Start</div></div>
<svg style="left:183px;top:489px;" width="15" height="16"><use href="#dd" width="15" height="16"/></svg>
<div style="position:absolute;left:6px;top:506px;width:196px;height:1px;border-top:1px dotted #B8B4A0"></div>
<div style="position:absolute;left:90px;top:506px;width:1px;height:19px;background:#A8A490"></div>
<div style="position:absolute;left:6px;top:506px;width:80px;height:19px;overflow:hidden"><div class="t" style="left:30px;top:4px;">Date Comp</div></div>
<svg style="left:183px;top:508px;" width="15" height="16"><use href="#dd" width="15" height="16"/></svg>
<div style="position:absolute;left:6px;top:525px;width:196px;height:1px;border-top:1px dotted #B8B4A0"></div>
<div style="position:absolute;left:9px;top:530px;width:10px;height:10px;background:linear-gradient(#fff,#D8D4C8);border:1px solid #7F9DB9;border-radius:1px"></div>
<div style="position:absolute;left:11px;top:534px;width:6px;height:1px;background:#000"></div>
<div class="t" style="left:23px;top:529px;font-weight:bold;font-size:11px;letter-spacing:0.3px">By Resource</div>
<div style="position:absolute;left:6px;top:544px;width:196px;height:1px;border-top:1px dotted #B8B4A0"></div>
<div style="position:absolute;left:90px;top:544px;width:1px;height:19px;background:#A8A490"></div>
<div style="position:absolute;left:6px;top:544px;width:80px;height:19px;overflow:hidden"><div class="t" style="left:30px;top:4px;">Owner</div></div>
<svg style="left:183px;top:546px;" width="15" height="16"><use href="#dd" width="15" height="16"/></svg>
<div style="position:absolute;left:6px;top:563px;width:196px;height:1px;border-top:1px dotted #B8B4A0"></div>
<div style="position:absolute;left:90px;top:563px;width:1px;height:19px;background:#A8A490"></div>
<div style="position:absolute;left:6px;top:563px;width:80px;height:19px;overflow:hidden"><div class="t" style="left:30px;top:4px;">Assignmer</div></div>
<svg style="left:183px;top:565px;" width="15" height="16"><use href="#dd" width="15" height="16"/></svg>
<div style="position:absolute;left:6px;top:582px;width:196px;height:1px;border-top:1px dotted #B8B4A0"></div>
<div style="position:absolute;left:90px;top:582px;width:1px;height:19px;background:#A8A490"></div>
<div style="position:absolute;left:6px;top:582px;width:80px;height:19px;overflow:hidden"><div class="t" style="left:30px;top:4px;">Departmer</div></div>
<svg style="left:183px;top:584px;" width="15" height="16"><use href="#dd" width="15" height="16"/></svg>
<div style="position:absolute;left:6px;top:601px;width:196px;height:1px;border-top:1px dotted #B8B4A0"></div>
<div style="position:absolute;left:201px;top:278px;width:17px;height:327px;background:linear-gradient(to right,#F3F1EC,#FEFEFB)"></div>
<svg style="left:203px;top:279px;" width="15" height="16"><use href="#ddu" width="15" height="16"/></svg>
<div style="position:absolute;left:203px;top:296px;width:14px;height:110px;background:linear-gradient(to right,#C8D8FC,#B8CCF8);border:1px solid #C3D3FD;border-radius:2px"></div>
<svg style="left:205px;top:345px" width="10" height="8"><path d="M2 1.5 H8 M2 3.5 H8 M2 5.5 H8" stroke="#EEF2FD" stroke-width="1"/></svg>
<svg style="left:203px;top:589px;" width="15" height="16"><use href="#dd" width="15" height="16"/></svg>
<div style="position:absolute;left:221px;top:102px;width:1057px;height:508px;background:#ECE9D8"></div>
<div style="position:absolute;left:221px;top:102px;width:1056px;height:40px;background:#ACA899;border:1px solid #B9B5A6;box-shadow:inset 1px 1px 0 #F4F2E8,inset -1px -1px 0 #F4F2E8"></div>
<div style="position:absolute;left:229px;top:109px;width:13px;height:13px;background:#fff;border:1px solid #1C5180"></div>
<svg style="left:231px;top:111px" width="9" height="9"><path d="M1 4 L3.5 7 L8 1.5" stroke="#21A121" stroke-width="2" fill="none"/></svg>
<div class="t" style="left:245px;top:109px;color:#FFFFFF;letter-spacing:0.1px">Current filter:</div>
<div class="t" style="left:368px;top:109px;color:#FFFFFF;letter-spacing:-0.05px">(Task Group&nbsp; (Project 2,HR Development))</div>
<div style="position:absolute;left:221px;top:144px;width:1055px;height:464px;background:#fff;border:1px solid #7F9DB9"></div>
<div style="position:absolute;left:222px;top:145px;width:1054px;height:35px;background:#ACA899"></div>
<div class="t" style="left:229px;top:157px;color:#E4E2D8;letter-spacing:-0.08px">Drag a column header here to group by that column</div>
<div style="position:absolute;left:222px;top:180px;width:1054px;height:19px;background:linear-gradient(to bottom,#EBEADB 0,#EBEADB 15px,#E2DFCE 16px,#D6D2C2 18px,#CBC7B8 19px)"></div>
<div style="position:absolute;left:222px;top:184px;width:45px;height:14px;"><div class="t" style="width:100%;text-align:center;top:0px">ID</div></div>
<div style="position:absolute;left:266px;top:183px;width:1px;height:13px;background:#C7C5B2"></div>
<div style="position:absolute;left:267px;top:183px;width:1px;height:13px;background:#FFFFFF"></div>
<div style="position:absolute;left:267px;top:184px;width:91px;height:14px;"><div class="t" style="width:100%;text-align:center;top:0px">Name</div></div>
<div style="position:absolute;left:357px;top:183px;width:1px;height:13px;background:#C7C5B2"></div>
<div style="position:absolute;left:358px;top:183px;width:1px;height:13px;background:#FFFFFF"></div>
<div style="position:absolute;left:358px;top:184px;width:109px;height:14px;"><div class="t" style="width:100%;text-align:center;top:0px">Status</div></div>
<svg style="left:467px;top:183px;" width="14" height="14"><use href="#dd" width="14" height="14"/></svg>
<div style="position:absolute;left:484px;top:183px;width:1px;height:13px;background:#C7C5B2"></div>
<div style="position:absolute;left:485px;top:183px;width:1px;height:13px;background:#FFFFFF"></div>
<div style="position:absolute;left:485px;top:184px;width:125px;height:14px;"><div class="t" style="width:100%;text-align:center;top:0px">Assigned</div></div>
<svg style="left:610px;top:183px;" width="14" height="14"><use href="#dd" width="14" height="14"/></svg>
<div style="position:absolute;left:626px;top:183px;width:1px;height:13px;background:#C7C5B2"></div>
<div style="position:absolute;left:627px;top:183px;width:1px;height:13px;background:#FFFFFF"></div>
<div style="position:absolute;left:627px;top:184px;width:97px;height:14px;"><div class="t" style="width:100%;text-align:center;top:0px">Start</div></div>
<svg style="left:741px;top:183px;" width="14" height="14"><use href="#dd" width="14" height="14"/></svg>
<div style="position:absolute;left:756px;top:183px;width:1px;height:13px;background:#C7C5B2"></div>
<div style="position:absolute;left:757px;top:183px;width:1px;height:13px;background:#FFFFFF"></div>
<div style="position:absolute;left:757px;top:184px;width:97px;height:14px;"><div class="t" style="width:100%;text-align:center;top:0px">End</div></div>
<svg style="left:854px;top:183px;" width="14" height="14"><use href="#dd" width="14" height="14"/></svg>
<div style="position:absolute;left:869px;top:183px;width:1px;height:13px;background:#C7C5B2"></div>
<div style="position:absolute;left:870px;top:183px;width:1px;height:13px;background:#FFFFFF"></div>
<div style="position:absolute;left:870px;top:184px;width:93px;height:14px;"><div class="t" style="width:100%;text-align:center;top:0px">Due Date</div></div>
<svg style="left:963px;top:183px;" width="14" height="14"><use href="#dd" width="14" height="14"/></svg>
<div style="position:absolute;left:978px;top:183px;width:1px;height:13px;background:#C7C5B2"></div>
<div style="position:absolute;left:979px;top:183px;width:1px;height:13px;background:#FFFFFF"></div>
<div style="position:absolute;left:979px;top:184px;width:112px;height:14px;"><div class="t" style="width:100%;text-align:center;top:0px">Customer Name</div></div>
<div style="position:absolute;left:1090px;top:183px;width:1px;height:13px;background:#C7C5B2"></div>
<div style="position:absolute;left:1091px;top:183px;width:1px;height:13px;background:#FFFFFF"></div>
<div style="position:absolute;left:1091px;top:184px;width:73px;height:14px;"><div class="t" style="width:100%;text-align:center;top:0px">Customer ID</div></div>
<div style="position:absolute;left:1163px;top:183px;width:1px;height:13px;background:#C7C5B2"></div>
<div style="position:absolute;left:1164px;top:183px;width:1px;height:13px;background:#FFFFFF"></div>
<div style="position:absolute;left:1164px;top:184px;width:111px;height:14px;"><div class="t" style="width:100%;text-align:center;top:0px">Billing Information</div></div>
<svg style="left:728px;top:185px" width="9" height="8"><path d="M4.5 0.5 L8.5 7.5 H0.5 Z" fill="none" stroke="#A7A7A0"/></svg>
<div style="position:absolute;left:222px;top:199px;width:1053px;height:21px;background:#316AC5;outline:1px dotted #E8A23A;outline-offset:-1px"></div>
<div style="position:absolute;left:222px;top:220px;width:1053px;height:1px;background:#ACA899"></div>
<div class="t" style="left:222px;top:204px;width:42px;text-align:right;color:#fff;letter-spacing:0.1px">13</div>
<div class="t" style="left:270px;top:204px;color:#fff">Task 1</div>
<div class="t" style="left:381px;top:204px;color:#fff">Reviewed</div>
<div style="position:absolute;left:486px;top:199px;width:140px;height:21px;overflow:hidden"><div class="t" style="left:0px;top:5px;color:#fff">Jane White</div></div>
<div class="t" style="left:627px;top:204px;width:130px;text-align:center;color:#fff;letter-spacing:0.1px">10/4/2010 9:00 AM</div>
<div class="t" style="left:757px;top:204px;width:113px;text-align:center;color:#fff;letter-spacing:0.1px">10/11/2010 5:00 PM</div>
<div class="t" style="left:870px;top:204px;width:109px;text-align:center;color:#fff;letter-spacing:0.1px">10/12/2010</div>
<div class="t" style="left:981px;top:204px;color:#fff">Bill Simons</div>
<div class="t" style="left:1091px;top:204px;width:71px;text-align:right;color:#fff;letter-spacing:0.1px">658974</div>
<div class="t" style="left:1164px;top:204px;width:108px;text-align:right;color:#fff;letter-spacing:0.1px">$1,000.00</div>
<div style="position:absolute;left:222px;top:242px;width:1053px;height:1px;background:#ACA899"></div>
<div class="t" style="left:222px;top:226px;width:42px;text-align:right;color:#000;letter-spacing:0.1px">14</div>
<div class="t" style="left:270px;top:226px;color:#000">Task 2</div>
<div class="t" style="left:381px;top:226px;color:#000">Completed</div>
<div style="position:absolute;left:486px;top:221px;width:140px;height:21px;overflow:hidden"><div class="t" style="left:0px;top:5px;color:#000">Mark Schweizer,David Miller</div></div>
<div class="t" style="left:627px;top:226px;width:130px;text-align:center;color:#000;letter-spacing:0.1px">10/11/2010 9:00 AM</div>
<div class="t" style="left:757px;top:226px;width:113px;text-align:center;color:#000;letter-spacing:0.1px">10/18/2010 5:00 PM</div>
<div class="t" style="left:870px;top:226px;width:109px;text-align:center;color:#000;letter-spacing:0.1px">10/21/2010</div>
<div class="t" style="left:981px;top:226px;color:#000">Juan Lopez</div>
<div class="t" style="left:1091px;top:226px;width:71px;text-align:right;color:#000;letter-spacing:0.1px">248796</div>
<div class="t" style="left:1164px;top:226px;width:108px;text-align:right;color:#000;letter-spacing:0.1px">$100.00</div>
<div style="position:absolute;left:222px;top:264px;width:1053px;height:1px;background:#ACA899"></div>
<div class="t" style="left:222px;top:248px;width:42px;text-align:right;color:#000;letter-spacing:0.1px">17</div>
<div class="t" style="left:270px;top:248px;color:#000">Task 5</div>
<div class="t" style="left:381px;top:248px;color:#000">Completed</div>
<div style="position:absolute;left:486px;top:243px;width:140px;height:21px;overflow:hidden"><div class="t" style="left:0px;top:5px;color:#000">David Miller</div></div>
<div class="t" style="left:627px;top:248px;width:130px;text-align:center;color:#000;letter-spacing:0.1px">10/15/2010 9:00 AM</div>
<div class="t" style="left:757px;top:248px;width:113px;text-align:center;color:#000;letter-spacing:0.1px">10/22/2010 5:00 PM</div>
<div class="t" style="left:870px;top:248px;width:109px;text-align:center;color:#000;letter-spacing:0.1px">10/25/2010</div>
<div class="t" style="left:981px;top:248px;color:#000">Kurt kauffmann</div>
<div class="t" style="left:1091px;top:248px;width:71px;text-align:right;color:#000;letter-spacing:0.1px">236541</div>
<div class="t" style="left:1164px;top:248px;width:108px;text-align:right;color:#000;letter-spacing:0.1px">$500.00</div>
<div style="position:absolute;left:222px;top:286px;width:1053px;height:1px;background:#ACA899"></div>
<div class="t" style="left:222px;top:270px;width:42px;text-align:right;color:#000;letter-spacing:0.1px">18</div>
<div class="t" style="left:270px;top:270px;color:#000">Task 7</div>
<div class="t" style="left:381px;top:270px;color:#000">Rejected</div>
<div style="position:absolute;left:486px;top:265px;width:140px;height:21px;overflow:hidden"><div class="t" style="left:0px;top:5px;color:#000">David Miller</div></div>
<div class="t" style="left:627px;top:270px;width:130px;text-align:center;color:#000;letter-spacing:0.1px">10/18/2010 9:00 AM</div>
<div class="t" style="left:757px;top:270px;width:113px;text-align:center;color:#000;letter-spacing:0.1px">10/25/2010 5:00 PM</div>
<div class="t" style="left:870px;top:270px;width:109px;text-align:center;color:#000;letter-spacing:0.1px">10/26/2010</div>
<div class="t" style="left:981px;top:270px;color:#000">Andrew Jackson</div>
<div class="t" style="left:1091px;top:270px;width:71px;text-align:right;color:#000;letter-spacing:0.1px">245871</div>
<div class="t" style="left:1164px;top:270px;width:108px;text-align:right;color:#000;letter-spacing:0.1px">$1,000.00</div>
<div style="position:absolute;left:222px;top:308px;width:1053px;height:1px;background:#ACA899"></div>
<div class="t" style="left:222px;top:292px;width:42px;text-align:right;color:#000;letter-spacing:0.1px">19</div>
<div class="t" style="left:270px;top:292px;color:#000">Task 9</div>
<div class="t" style="left:381px;top:292px;color:#000">Reviewed</div>
<div style="position:absolute;left:486px;top:287px;width:140px;height:21px;overflow:hidden"><div class="t" style="left:0px;top:5px;color:#000">Mark Schweizer</div></div>
<div class="t" style="left:627px;top:292px;width:130px;text-align:center;color:#000;letter-spacing:0.1px">10/18/2010 9:00 AM</div>
<div class="t" style="left:757px;top:292px;width:113px;text-align:center;color:#000;letter-spacing:0.1px">10/25/2010 5:00 PM</div>
<div class="t" style="left:870px;top:292px;width:109px;text-align:center;color:#000;letter-spacing:0.1px">10/27/2010</div>
<div class="t" style="left:981px;top:292px;color:#000">David Aguilar</div>
<div class="t" style="left:1091px;top:292px;width:71px;text-align:right;color:#000;letter-spacing:0.1px">326541</div>
<div class="t" style="left:1164px;top:292px;width:108px;text-align:right;color:#000;letter-spacing:0.1px">$3,000.00</div>
<div style="position:absolute;left:222px;top:330px;width:1053px;height:1px;background:#ACA899"></div>
<div class="t" style="left:222px;top:314px;width:42px;text-align:right;color:#000;letter-spacing:0.1px">15</div>
<div class="t" style="left:270px;top:314px;color:#000">Task 3</div>
<div class="t" style="left:381px;top:314px;color:#000">Work in Progress</div>
<div style="position:absolute;left:486px;top:309px;width:140px;height:21px;overflow:hidden"><div class="t" style="left:0px;top:5px;color:#000">David Miller</div></div>
<div class="t" style="left:627px;top:314px;width:130px;text-align:center;color:#000;letter-spacing:0.1px">10/19/2010 9:00 AM</div>
<div class="t" style="left:757px;top:314px;width:113px;text-align:center;color:#000;letter-spacing:0.1px">10/26/2010 6:00 PM</div>
<div class="t" style="left:870px;top:314px;width:109px;text-align:center;color:#000;letter-spacing:0.1px">10/28/2010</div>
<div class="t" style="left:981px;top:314px;color:#000">Jennifer Wilson</div>
<div class="t" style="left:1091px;top:314px;width:71px;text-align:right;color:#000;letter-spacing:0.1px">524163</div>
<div class="t" style="left:1164px;top:314px;width:108px;text-align:right;color:#000;letter-spacing:0.1px">$5,600.00</div>
<div style="position:absolute;left:222px;top:352px;width:1053px;height:1px;background:#ACA899"></div>
<div class="t" style="left:222px;top:336px;width:42px;text-align:right;color:#000;letter-spacing:0.1px">20</div>
<div class="t" style="left:270px;top:336px;color:#000">Task 10</div>
<div class="t" style="left:381px;top:336px;color:#000">Work in Progress</div>
<div style="position:absolute;left:486px;top:331px;width:140px;height:21px;overflow:hidden"><div class="t" style="left:0px;top:5px;color:#000">Jason Lee</div></div>
<div class="t" style="left:627px;top:336px;width:130px;text-align:center;color:#000;letter-spacing:0.1px">10/20/2010 9:00 AM</div>
<div class="t" style="left:757px;top:336px;width:113px;text-align:center;color:#000;letter-spacing:0.1px">11/3/2010 5:00 PM</div>
<div class="t" style="left:870px;top:336px;width:109px;text-align:center;color:#000;letter-spacing:0.1px">11/5/2010</div>
<div class="t" style="left:981px;top:336px;color:#000">Markus Klein</div>
<div class="t" style="left:1091px;top:336px;width:71px;text-align:right;color:#000;letter-spacing:0.1px">258769</div>
<div class="t" style="left:1164px;top:336px;width:108px;text-align:right;color:#000;letter-spacing:0.1px">$2,500.00</div>
<div style="position:absolute;left:222px;top:374px;width:1053px;height:1px;background:#ACA899"></div>
<div class="t" style="left:222px;top:358px;width:42px;text-align:right;color:#000;letter-spacing:0.1px">16</div>
<div class="t" style="left:270px;top:358px;color:#000">Task 4</div>
<div class="t" style="left:381px;top:358px;color:#000">Approval Queue</div>
<div style="position:absolute;left:486px;top:353px;width:140px;height:21px;overflow:hidden"><div class="t" style="left:0px;top:5px;color:#000">Miranda Ryan</div></div>
<div class="t" style="left:627px;top:358px;width:130px;text-align:center;color:#000;letter-spacing:0.1px">10/21/2010 8:00 AM</div>
<div class="t" style="left:757px;top:358px;width:113px;text-align:center;color:#000;letter-spacing:0.1px">10/28/2010 5:00 PM</div>
<div class="t" style="left:870px;top:358px;width:109px;text-align:center;color:#000;letter-spacing:0.1px">10/21/2010</div>
<div class="t" style="left:981px;top:358px;color:#000">Paul Lee</div>
<div class="t" style="left:1091px;top:358px;width:71px;text-align:right;color:#000;letter-spacing:0.1px">236587</div>
<div class="t" style="left:1164px;top:358px;width:108px;text-align:right;color:#000;letter-spacing:0.1px">$1,500.00</div>
<div style="position:absolute;left:222px;top:396px;width:1053px;height:1px;background:#ACA899"></div>
<div class="t" style="left:222px;top:380px;width:42px;text-align:right;color:#000;letter-spacing:0.1px">21</div>
<div class="t" style="left:270px;top:380px;color:#000">Task 11</div>
<div class="t" style="left:381px;top:380px;color:#000">Work in Progress</div>
<div style="position:absolute;left:486px;top:375px;width:140px;height:21px;overflow:hidden"><div class="t" style="left:0px;top:3px;color:#000">David Miller,Mark</div></div>
<div class="t" style="left:627px;top:380px;width:130px;text-align:center;color:#000;letter-spacing:0.1px">10/21/2010 9:00 AM</div>
<div class="t" style="left:757px;top:380px;width:113px;text-align:center;color:#000;letter-spacing:0.1px">10/28/2010 5:00 PM</div>
<div class="t" style="left:870px;top:380px;width:109px;text-align:center;color:#000;letter-spacing:0.1px">10/29/2010</div>
<div class="t" style="left:981px;top:380px;color:#000">Michel Watson</div>
<div class="t" style="left:1091px;top:380px;width:71px;text-align:right;color:#000;letter-spacing:0.1px">569874</div>
<div class="t" style="left:1164px;top:380px;width:108px;text-align:right;color:#000;letter-spacing:0.1px">$300.00</div>
<div style="position:absolute;left:222px;top:418px;width:1053px;height:1px;background:#ACA899"></div>
<div class="t" style="left:222px;top:402px;width:42px;text-align:right;color:#000;letter-spacing:0.1px">24</div>
<div class="t" style="left:270px;top:402px;color:#000">Task 14</div>
<div class="t" style="left:381px;top:402px;color:#000">Pending Approval</div>
<div style="position:absolute;left:486px;top:397px;width:140px;height:21px;overflow:hidden"><div class="t" style="left:0px;top:5px;color:#000">David Miller</div></div>
<div class="t" style="left:627px;top:402px;width:130px;text-align:center;color:#000;letter-spacing:0.1px">10/22/2010 9:00 AM</div>
<div class="t" style="left:757px;top:402px;width:113px;text-align:center;color:#000;letter-spacing:0.1px">10/29/2010 5:00 PM</div>
<div class="t" style="left:870px;top:402px;width:109px;text-align:center;color:#000;letter-spacing:0.1px">11/1/2010</div>
<div class="t" style="left:981px;top:402px;color:#000">Laurent Goche</div>
<div class="t" style="left:1091px;top:402px;width:71px;text-align:right;color:#000;letter-spacing:0.1px">547892</div>
<div class="t" style="left:1164px;top:402px;width:108px;text-align:right;color:#000;letter-spacing:0.1px">$1,500.00</div>
<div style="position:absolute;left:222px;top:440px;width:1053px;height:1px;background:#ACA899"></div>
<div class="t" style="left:222px;top:424px;width:42px;text-align:right;color:#000;letter-spacing:0.1px">22</div>
<div class="t" style="left:270px;top:424px;color:#000">Task 12</div>
<div class="t" style="left:381px;top:424px;color:#000">To-do Queue</div>
<div style="position:absolute;left:486px;top:419px;width:140px;height:21px;overflow:hidden"><div class="t" style="left:0px;top:5px;color:#000">David Miller</div></div>
<div class="t" style="left:627px;top:424px;width:130px;text-align:center;color:#000;letter-spacing:0.1px">10/26/2010 9:00 AM</div>
<div class="t" style="left:757px;top:424px;width:113px;text-align:center;color:#000;letter-spacing:0.1px">11/2/2010 5:00 PM</div>
<div class="t" style="left:870px;top:424px;width:109px;text-align:center;color:#000;letter-spacing:0.1px">11/3/2010</div>
<div class="t" style="left:981px;top:424px;color:#000">Devin Brickel</div>
<div class="t" style="left:1091px;top:424px;width:71px;text-align:right;color:#000;letter-spacing:0.1px">527639</div>
<div class="t" style="left:1164px;top:424px;width:108px;text-align:right;color:#000;letter-spacing:0.1px">$5,000.00</div>
<div style="position:absolute;left:222px;top:462px;width:1053px;height:1px;background:#ACA899"></div>
<div class="t" style="left:222px;top:446px;width:42px;text-align:right;color:#000;letter-spacing:0.1px">23</div>
<div class="t" style="left:270px;top:446px;color:#000">Task 13</div>
<div class="t" style="left:381px;top:446px;color:#000">To-do Queue</div>
<div style="position:absolute;left:486px;top:441px;width:140px;height:21px;overflow:hidden"><div class="t" style="left:0px;top:5px;color:#000">David Miller</div></div>
<div class="t" style="left:627px;top:446px;width:130px;text-align:center;color:#000;letter-spacing:0.1px">10/27/2010 9:00 AM</div>
<div class="t" style="left:757px;top:446px;width:113px;text-align:center;color:#000;letter-spacing:0.1px">11/3/2010 5:00 PM</div>
<div class="t" style="left:870px;top:446px;width:109px;text-align:center;color:#000;letter-spacing:0.1px">11/4/2010</div>
<div class="t" style="left:981px;top:446px;color:#000">David Barrow</div>
<div class="t" style="left:1091px;top:446px;width:71px;text-align:right;color:#000;letter-spacing:0.1px">254789</div>
<div class="t" style="left:1164px;top:446px;width:108px;text-align:right;color:#000;letter-spacing:0.1px">$1,200.00</div>
<div style="position:absolute;left:267px;top:199px;width:1px;height:264px;background:#ACA899"></div>
<div style="position:absolute;left:357px;top:199px;width:1px;height:264px;background:#ACA899"></div>
<div style="position:absolute;left:485px;top:199px;width:1px;height:264px;background:#ACA899"></div>
<div style="position:absolute;left:627px;top:199px;width:1px;height:264px;background:#ACA899"></div>
<div style="position:absolute;left:757px;top:199px;width:1px;height:264px;background:#ACA899"></div>
<div style="position:absolute;left:870px;top:199px;width:1px;height:264px;background:#ACA899"></div>
<div style="position:absolute;left:979px;top:199px;width:1px;height:264px;background:#ACA899"></div>
<div style="position:absolute;left:1091px;top:199px;width:1px;height:264px;background:#ACA899"></div>
<div style="position:absolute;left:1164px;top:199px;width:1px;height:264px;background:#ACA899"></div>
<div style="position:absolute;left:357px;top:181px;width:129px;height:281px;box-shadow:inset 6px 5px 7px -3px rgba(0,0,0,0.38)"></div>
<div style="position:absolute;left:355px;top:178px;width:134px;height:286px;box-shadow:4px 5px 6px rgba(0,0,0,0.28)"></div>
<div style="position:absolute;left:355px;top:178px;width:134px;height:286px;border:2.5px solid #F21010"></div>
<div style="position:absolute;left:222px;top:581px;width:1054px;height:1px;background:#ACA899"></div>
<div style="position:absolute;left:222px;top:582px;width:1053px;height:25px;background:#ECE9D8;border-bottom:1px solid #CCC6B4;border-right:1px solid #E0DBCB"></div>
<div style="position:absolute;left:224px;top:584px;width:42px;height:21px;background:#F1F0EA;border-top:1px solid #A8A594;border-left:1px solid #A8A594;border-radius:2px"></div>
<div class="t" style="left:224px;top:589px;width:38px;text-align:right;letter-spacing:0.1px">12</div>
<div style="position:absolute;left:0px;top:607px;width:1280px;height:8px;background:#ECE9D8"></div>
<div style="position:absolute;left:2px;top:614px;width:1276px;height:22px;background:linear-gradient(to bottom,#FBFBF8,#F4F3EE 60%,#EFEDE5);border:1px solid #D5D2C2;border-radius:5px 5px 5px 5px"></div>
<div class="t" style="left:6px;top:618px;">Permissions</div>
<svg style="left:1245px;top:619px;" width="12" height="13"><use href="#pin" width="12" height="13"/></svg>
<svg style="left:1261px;top:619px;" width="13" height="13"><use href="#xred" width="13" height="13"/></svg>
<div style="position:absolute;left:2px;top:636px;width:1276px;height:30px;background:linear-gradient(to bottom,#F6F5F1,#EEECE2 70%,#E6E3D6)"></div>
<div style="position:absolute;left:6px;top:644px;width:2px;height:2px;background:#B0AC9E"></div><div style="position:absolute;left:6px;top:647px;width:2px;height:2px;background:#B0AC9E"></div><div style="position:absolute;left:6px;top:650px;width:2px;height:2px;background:#B0AC9E"></div><div style="position:absolute;left:6px;top:653px;width:2px;height:2px;background:#B0AC9E"></div><div style="position:absolute;left:6px;top:656px;width:2px;height:2px;background:#B0AC9E"></div><div style="position:absolute;left:6px;top:659px;width:2px;height:2px;background:#B0AC9E"></div>
<svg style="left:16px;top:644px" width="16" height="16"><rect x="0.5" y="0.5" width="5" height="4" fill="#E8E8E8" stroke="#A8A8A8"/><path d="M2.5 5 V12.5 H6" stroke="#808080" stroke-dasharray="1 1" fill="none"/><rect x="9.5" y="10.5" width="5" height="4" fill="#E8E8E8" stroke="#A8A8A8"/><path d="M9 2 Q12 2 12 5 M10.5 4 L12 6 L13.5 4" stroke="#303030" stroke-width="1.2" fill="none"/></svg>
<svg style="left:41px;top:644px" width="16" height="16"><path d="M8 8 V4 A3 3 0 0 1 14 4 V6" stroke="#B8B8B8" stroke-width="1.6" fill="none"/><rect x="1" y="8" width="8" height="7" fill="#E0E0E0" stroke="#C0C0C0"/></svg>
<svg style="left:65px;top:644px" width="16" height="16"><path d="M2.5 8 V5 A3 3 0 0 1 8.5 5 V8" stroke="#B8B8B8" stroke-width="1.6" fill="none"/><rect x="1" y="8" width="9" height="7" fill="#E0E0E0" stroke="#C0C0C0"/></svg>
<svg style="left:86px;top:657px" width="6" height="4"><path d="M0 0 H5 L2.5 3 Z" fill="#000"/></svg>
<div style="position:absolute;left:3px;top:666px;width:1274px;height:3px;background:#FBFBF8"></div>
<div style="position:absolute;left:4px;top:668px;width:1272px;height:15px;background:#ACA899"></div>
<div class="t" style="left:7px;top:668px;font-family:'Liberation Serif',serif;font-weight:bold;font-size:13.4px;line-height:15px;letter-spacing:0">Task: #13 - &#39;Task 1&#39;</div>
<div style="position:absolute;left:2px;top:685px;width:1275px;height:229px;background:#fff;border:1px solid #7F9DB9"></div>
<div style="position:absolute;left:3px;top:686px;width:1258px;height:19px;background:linear-gradient(to bottom,#EBEADB 0,#EBEADB 15px,#E2DFCE 16px,#D6D2C2 18px,#CBC7B8 19px)"></div>
<div style="position:absolute;left:3px;top:690px;width:603px;height:14px;"><div class="t" style="width:100%;text-align:center;top:0px">Roles</div></div>
<div style="position:absolute;left:622px;top:689px;width:1px;height:13px;background:#C7C5B2"></div>
<div style="position:absolute;left:623px;top:689px;width:1px;height:13px;background:#FFFFFF"></div>
<div style="position:absolute;left:623px;top:690px;width:158px;height:14px;"><div class="t" style="width:100%;text-align:center;top:0px">View</div></div>
<div style="position:absolute;left:780px;top:689px;width:1px;height:13px;background:#C7C5B2"></div>
<div style="position:absolute;left:781px;top:689px;width:1px;height:13px;background:#FFFFFF"></div>
<div style="position:absolute;left:781px;top:690px;width:161px;height:14px;"><div class="t" style="width:100%;text-align:center;top:0px">Edit</div></div>
<div style="position:absolute;left:941px;top:689px;width:1px;height:13px;background:#C7C5B2"></div>
<div style="position:absolute;left:942px;top:689px;width:1px;height:13px;background:#FFFFFF"></div>
<div style="position:absolute;left:942px;top:690px;width:159px;height:14px;"><div class="t" style="width:100%;text-align:center;top:0px">Delete</div></div>
<div style="position:absolute;left:1100px;top:689px;width:1px;height:13px;background:#C7C5B2"></div>
<div style="position:absolute;left:1101px;top:689px;width:1px;height:13px;background:#FFFFFF"></div>
<div style="position:absolute;left:1101px;top:690px;width:159px;height:14px;"><div class="t" style="width:100%;text-align:center;top:0px">Setting permissions</div></div>
<svg style="left:609px;top:691px" width="9" height="8"><path d="M4.5 0.5 L8.5 7.5 H0.5 Z" fill="none" stroke="#A7A7A0"/></svg>
<div style="position:absolute;left:3px;top:723px;width:1258px;height:1px;background:#ACA899"></div>
<div class="t" style="left:5px;top:708px;font-weight:bold;font-size:12px;letter-spacing:-0.1px">Unlimited</div>
<svg style="left:628px;top:706px;" width="16" height="16"><use href="#lockopen" width="16" height="16"/></svg>
<div class="t" style="left:647px;top:708px;letter-spacing:-0.2px">Allow(By Parent)</div>
<svg style="left:786px;top:706px;" width="16" height="16"><use href="#lockopen" width="16" height="16"/></svg>
<div class="t" style="left:805px;top:708px;letter-spacing:-0.2px">Allow(By Parent)</div>
<svg style="left:947px;top:706px;" width="16" height="16"><use href="#lockopen" width="16" height="16"/></svg>
<div class="t" style="left:966px;top:708px;letter-spacing:-0.2px">Allow(By Parent)</div>
<svg style="left:1106px;top:706px;" width="16" height="16"><use href="#lockopen" width="16" height="16"/></svg>
<div class="t" style="left:1125px;top:708px;letter-spacing:-0.2px">Allow(By Parent)</div>
<div style="position:absolute;left:3px;top:723px;width:620px;height:19px;background:#9DB9EB"></div>
<div style="position:absolute;left:3px;top:742px;width:1258px;height:1px;background:#ACA899"></div>
<div class="t" style="left:5px;top:727px;">Administrator</div>
<svg style="left:628px;top:725px;" width="16" height="16"><use href="#lockopen" width="16" height="16"/></svg>
<div class="t" style="left:647px;top:727px;letter-spacing:-0.2px">Allow(By Parent)</div>
<svg style="left:786px;top:725px;" width="16" height="16"><use href="#lockopen" width="16" height="16"/></svg>
<div class="t" style="left:805px;top:727px;letter-spacing:-0.2px">Allow(By Parent)</div>
<svg style="left:947px;top:725px;" width="16" height="16"><use href="#lockopen" width="16" height="16"/></svg>
<div class="t" style="left:966px;top:727px;letter-spacing:-0.2px">Allow(By Parent)</div>
<svg style="left:1106px;top:725px;" width="16" height="16"><use href="#lockopen" width="16" height="16"/></svg>
<div class="t" style="left:1125px;top:727px;letter-spacing:-0.2px">Allow(By Parent)</div>
<div style="position:absolute;left:3px;top:761px;width:1258px;height:1px;background:#ACA899"></div>
<div class="t" style="left:5px;top:746px;">Bryan Anderson</div>
<svg style="left:628px;top:744px;" width="16" height="16"><use href="#lockdeny" width="16" height="16"/></svg>
<div class="t" style="left:647px;top:746px;letter-spacing:-0.2px">Deny(By Parent)</div>
<svg style="left:786px;top:744px;" width="16" height="16"><use href="#lockdeny" width="16" height="16"/></svg>
<div class="t" style="left:805px;top:746px;letter-spacing:-0.2px">Deny(By Parent)</div>
<svg style="left:947px;top:744px;" width="16" height="16"><use href="#lockdeny" width="16" height="16"/></svg>
<div class="t" style="left:966px;top:746px;letter-spacing:-0.2px">Deny(By Parent)</div>
<svg style="left:1106px;top:744px;" width="16" height="16"><use href="#lockdeny" width="16" height="16"/></svg>
<div class="t" style="left:1125px;top:746px;letter-spacing:-0.2px">Deny(By Parent)</div>
<div style="position:absolute;left:3px;top:780px;width:1258px;height:1px;background:#ACA899"></div>
<div class="t" style="left:5px;top:765px;">David Miller</div>
<svg style="left:628px;top:763px;" width="16" height="16"><use href="#lockdeny" width="16" height="16"/></svg>
<div class="t" style="left:647px;top:765px;letter-spacing:-0.2px">Deny(By Parent)</div>
<svg style="left:786px;top:763px;" width="16" height="16"><use href="#lockdeny" width="16" height="16"/></svg>
<div class="t" style="left:805px;top:765px;letter-spacing:-0.2px">Deny(By Parent)</div>
<svg style="left:947px;top:763px;" width="16" height="16"><use href="#lockdeny" width="16" height="16"/></svg>
<div class="t" style="left:966px;top:765px;letter-spacing:-0.2px">Deny(By Parent)</div>
<svg style="left:1106px;top:763px;" width="16" height="16"><use href="#lockdeny" width="16" height="16"/></svg>
<div class="t" style="left:1125px;top:765px;letter-spacing:-0.2px">Deny(By Parent)</div>
<div style="position:absolute;left:3px;top:799px;width:1258px;height:1px;background:#ACA899"></div>
<div class="t" style="left:5px;top:784px;">Jane White</div>
<svg style="left:628px;top:782px;" width="16" height="16"><use href="#lockdeny" width="16" height="16"/></svg>
<div class="t" style="left:647px;top:784px;letter-spacing:-0.2px">Deny(By Parent)</div>
<svg style="left:786px;top:782px;" width="16" height="16"><use href="#lockdeny" width="16" height="16"/></svg>
<div class="t" style="left:805px;top:784px;letter-spacing:-0.2px">Deny(By Parent)</div>
<svg style="left:947px;top:782px;" width="16" height="16"><use href="#lockdeny" width="16" height="16"/></svg>
<div class="t" style="left:966px;top:784px;letter-spacing:-0.2px">Deny(By Parent)</div>
<svg style="left:1106px;top:782px;" width="16" height="16"><use href="#lockdeny" width="16" height="16"/></svg>
<div class="t" style="left:1125px;top:784px;letter-spacing:-0.2px">Deny(By Parent)</div>
<div style="position:absolute;left:3px;top:818px;width:1258px;height:1px;background:#ACA899"></div>
<div class="t" style="left:5px;top:803px;">Jason Lee</div>
<svg style="left:628px;top:801px;" width="16" height="16"><use href="#lockdeny" width="16" height="16"/></svg>
<div class="t" style="left:647px;top:803px;letter-spacing:-0.2px">Deny(By Parent)</div>
<svg style="left:786px;top:801px;" width="16" height="16"><use href="#lockdeny" width="16" height="16"/></svg>
<div class="t" style="left:805px;top:803px;letter-spacing:-0.2px">Deny(By Parent)</div>
<svg style="left:947px;top:801px;" width="16" height="16"><use href="#lockdeny" width="16" height="16"/></svg>
<div class="t" style="left:966px;top:803px;letter-spacing:-0.2px">Deny(By Parent)</div>
<svg style="left:1106px;top:801px;" width="16" height="16"><use href="#lockdeny" width="16" height="16"/></svg>
<div class="t" style="left:1125px;top:803px;letter-spacing:-0.2px">Deny(By Parent)</div>
<div style="position:absolute;left:3px;top:837px;width:1258px;height:1px;background:#ACA899"></div>
<div class="t" style="left:5px;top:822px;">Justin Morgan</div>
<svg style="left:628px;top:820px;" width="16" height="16"><use href="#lockdeny" width="16" height="16"/></svg>
<div class="t" style="left:647px;top:822px;letter-spacing:-0.2px">Deny(By Parent)</div>
<svg style="left:786px;top:820px;" width="16" height="16"><use href="#lockdeny" width="16" height="16"/></svg>
<div class="t" style="left:805px;top:822px;letter-spacing:-0.2px">Deny(By Parent)</div>
<svg style="left:947px;top:820px;" width="16" height="16"><use href="#lockdeny" width="16" height="16"/></svg>
<div class="t" style="left:966px;top:822px;letter-spacing:-0.2px">Deny(By Parent)</div>
<svg style="left:1106px;top:820px;" width="16" height="16"><use href="#lockdeny" width="16" height="16"/></svg>
<div class="t" style="left:1125px;top:822px;letter-spacing:-0.2px">Deny(By Parent)</div>
<div style="position:absolute;left:3px;top:856px;width:1258px;height:1px;background:#ACA899"></div>
<div class="t" style="left:5px;top:841px;">Mark Schweizer</div>
<svg style="left:628px;top:839px;" width="16" height="16"><use href="#lockdeny" width="16" height="16"/></svg>
<div class="t" style="left:647px;top:841px;letter-spacing:-0.2px">Deny(By Parent)</div>
<svg style="left:786px;top:839px;" width="16" height="16"><use href="#lockdeny" width="16" height="16"/></svg>
<div class="t" style="left:805px;top:841px;letter-spacing:-0.2px">Deny(By Parent)</div>
<svg style="left:947px;top:839px;" width="16" height="16"><use href="#lockdeny" width="16" height="16"/></svg>
<div class="t" style="left:966px;top:841px;letter-spacing:-0.2px">Deny(By Parent)</div>
<svg style="left:1106px;top:839px;" width="16" height="16"><use href="#lockdeny" width="16" height="16"/></svg>
<div class="t" style="left:1125px;top:841px;letter-spacing:-0.2px">Deny(By Parent)</div>
<div style="position:absolute;left:3px;top:875px;width:1258px;height:1px;background:#ACA899"></div>
<div class="t" style="left:5px;top:860px;">Mike Hughes</div>
<svg style="left:628px;top:858px;" width="16" height="16"><use href="#lockdeny" width="16" height="16"/></svg>
<div class="t" style="left:647px;top:860px;letter-spacing:-0.2px">Deny(By Parent)</div>
<svg style="left:786px;top:858px;" width="16" height="16"><use href="#lockdeny" width="16" height="16"/></svg>
<div class="t" style="left:805px;top:860px;letter-spacing:-0.2px">Deny(By Parent)</div>
<svg style="left:947px;top:858px;" width="16" height="16"><use href="#lockdeny" width="16" height="16"/></svg>
<div class="t" style="left:966px;top:860px;letter-spacing:-0.2px">Deny(By Parent)</div>
<svg style="left:1106px;top:858px;" width="16" height="16"><use href="#lockdeny" width="16" height="16"/></svg>
<div class="t" style="left:1125px;top:860px;letter-spacing:-0.2px">Deny(By Parent)</div>
<div style="position:absolute;left:3px;top:894px;width:1258px;height:1px;background:#ACA899"></div>
<div class="t" style="left:5px;top:879px;">Miranda Ryan</div>
<svg style="left:628px;top:877px;" width="16" height="16"><use href="#lockdeny" width="16" height="16"/></svg>
<div class="t" style="left:647px;top:879px;letter-spacing:-0.2px">Deny(By Parent)</div>
<svg style="left:786px;top:877px;" width="16" height="16"><use href="#lockdeny" width="16" height="16"/></svg>
<div class="t" style="left:805px;top:879px;letter-spacing:-0.2px">Deny(By Parent)</div>
<svg style="left:947px;top:877px;" width="16" height="16"><use href="#lockdeny" width="16" height="16"/></svg>
<div class="t" style="left:966px;top:879px;letter-spacing:-0.2px">Deny(By Parent)</div>
<svg style="left:1106px;top:877px;" width="16" height="16"><use href="#lockdeny" width="16" height="16"/></svg>
<div class="t" style="left:1125px;top:879px;letter-spacing:-0.2px">Deny(By Parent)</div>
<div class="t" style="left:5px;top:898px;">Peter Lawrence</div>
<svg style="left:628px;top:896px;" width="16" height="16"><use href="#lockdeny" width="16" height="16"/></svg>
<div class="t" style="left:647px;top:898px;letter-spacing:-0.2px">Deny(By Parent)</div>
<svg style="left:786px;top:896px;" width="16" height="16"><use href="#lockdeny" width="16" height="16"/></svg>
<div class="t" style="left:805px;top:898px;letter-spacing:-0.2px">Deny(By Parent)</div>
<svg style="left:947px;top:896px;" width="16" height="16"><use href="#lockdeny" width="16" height="16"/></svg>
<div class="t" style="left:966px;top:898px;letter-spacing:-0.2px">Deny(By Parent)</div>
<svg style="left:1106px;top:896px;" width="16" height="16"><use href="#lockdeny" width="16" height="16"/></svg>
<div class="t" style="left:1125px;top:898px;letter-spacing:-0.2px">Deny(By Parent)</div>
<div style="position:absolute;left:623px;top:705px;width:1px;height:208px;background:#ACA899"></div>
<div style="position:absolute;left:781px;top:705px;width:1px;height:208px;background:#ACA899"></div>
<div style="position:absolute;left:942px;top:705px;width:1px;height:208px;background:#ACA899"></div>
<div style="position:absolute;left:1101px;top:705px;width:1px;height:208px;background:#ACA899"></div>
<div style="position:absolute;left:1260px;top:705px;width:1px;height:208px;background:#ACA899"></div>
<div style="position:absolute;left:1261px;top:686px;width:15px;height:227px;background:linear-gradient(to right,#F3F1EC,#FEFEFB)"></div>
<svg style="left:1262px;top:687px;" width="14" height="16"><use href="#ddu" width="14" height="16"/></svg>
<div style="position:absolute;left:1262px;top:704px;width:14px;height:160px;background:linear-gradient(to right,#C8D8FC,#B8CCF8);border:1px solid #C3D3FD;border-radius:2px"></div>
<svg style="left:1264px;top:780px" width="10" height="8"><path d="M2 1.5 H8 M2 3.5 H8 M2 5.5 H8" stroke="#EEF2FD" stroke-width="1"/></svg>
<svg style="left:1262px;top:896px;" width="14" height="16"><use href="#dd" width="14" height="16"/></svg>
<div style="position:absolute;left:2px;top:914px;width:1276px;height:5px;background:#F0EFE8"></div>
<div style="position:absolute;left:2px;top:918px;width:1275px;height:1px;background:#A0AEBE"></div>
<div style="position:absolute;left:2px;top:919px;width:1276px;height:26px;background:linear-gradient(to bottom,#F4F3EE,#EEECE3)"></div>
<div style="position:absolute;left:2px;top:944px;width:1276px;height:1px;background:#D8D4C4"></div>
<div style="position:absolute;left:7px;top:919px;width:80px;height:23px;background:linear-gradient(to bottom,#FDFDFB,#F2F1EB 70%,#E6E4DA);border:1px solid #9AAEC4;border-top:none;border-radius:0 0 3px 3px"></div><div class="t" style="left:31px;top:924px;">Comments</div>
<div style="position:absolute;left:88px;top:919px;width:88px;height:23px;background:linear-gradient(to bottom,#FDFDFB,#F2F1EB 70%,#E6E4DA);border:1px solid #9AAEC4;border-top:none;border-radius:0 0 3px 3px"></div><div class="t" style="left:112px;top:924px;">Task history</div>
<div style="position:absolute;left:177px;top:919px;width:90px;height:23px;background:linear-gradient(to bottom,#FDFDFB,#F2F1EB 70%,#E6E4DA);border:1px solid #9AAEC4;border-top:none;border-radius:0 0 3px 3px"></div><div class="t" style="left:201px;top:924px;">Attachments</div>
<div style="position:absolute;left:267px;top:919px;width:87px;height:23px;background:#FCFCFE;border:1px solid #9AAEC4;border-top:none;border-bottom:3px solid #F1A640;border-radius:0 0 3px 3px"></div><div class="t" style="left:291px;top:924px;">Permissions</div>
<div style="position:absolute;left:355px;top:919px;width:134px;height:23px;background:linear-gradient(to bottom,#FDFDFB,#F2F1EB 70%,#E6E4DA);border:1px solid #9AAEC4;border-top:none;border-radius:0 0 3px 3px"></div><div class="t" style="left:379px;top:924px;">Resource Assignment</div>
<svg style="left:10px;top:921px" width="17" height="17"><rect x="8.5" y="1.5" width="7" height="12" fill="#F2F2F2" stroke="#A8A8A8"/><path d="M10 4 H14 M10 6 H14 M10 8 H13" stroke="#303030"/><circle cx="5" cy="4.5" r="3" fill="#D8DEEA" stroke="#8890A8"/><path d="M1 15.5 V11 Q1 8.5 5 8.5 Q9 8.5 9 11 V15.5 Z" fill="#BCC4D8" stroke="#8890A8"/></svg>
<svg style="left:91px;top:927px;" width="12" height="12"><use href="#clockb" width="12" height="12"/></svg><svg style="left:99px;top:921px" width="10" height="17"><path d="M1 1.5 H9 M1 15.5 H9" stroke="#6A7898" stroke-width="1.5"/><path d="M2 2 Q2 6 5 8.5 Q8 11 8 15 H2 Q2 11 5 8.5 Q8 6 8 2 Z" fill="#E4E8F0" stroke="#7080A0"/></svg>
<svg style="left:180px;top:920px" width="17" height="18"><path d="M1.5 8.5 H5 L6 9.5 H12.5 V16.5 H1.5 Z" fill="#F0C040" stroke="#C89820"/><path d="M10 13 V4 A2.5 2.5 0 0 0 5 4 V11 A1.2 1.2 0 0 0 7.5 11 V5" stroke="#7888A8" stroke-width="1.2" fill="none"/></svg>
<svg style="left:270px;top:920px" width="18" height="18"><circle cx="12" cy="5.5" r="4.5" fill="#E0E4EC" stroke="#8088A0" stroke-width="1.2"/><circle cx="12.5" cy="5" r="1.3" fill="#8088A0"/><path d="M9 8.5 L1.5 16 M3.5 14 L5.5 16 M5.5 12 L7 13.5" stroke="#8088A0" stroke-width="1.8"/></svg>
<svg style="left:358px;top:920px" width="17" height="18"><circle cx="8" cy="5" r="4" fill="#D0D6E4" stroke="#8890A8"/><path d="M2 16.5 V13 Q2 9.5 8 9.5 Q14 9.5 14 13 V16.5 Z" fill="#B8C0D4" stroke="#8890A8"/></svg>
<svg style="left:1241px;top:924px" width="15" height="14"><rect x="0.5" y="0.5" width="14" height="13" rx="2" fill="url(#gdd)" stroke="#C3D3FD"/><path d="M9 3.5 L5.5 7 L9 10.5" stroke="#4D6185" stroke-width="2" fill="none"/></svg>
<svg style="left:1258px;top:924px" width="15" height="14"><rect x="0.5" y="0.5" width="14" height="13" rx="2" fill="#EEEDE6" stroke="#DDDBD0"/><path d="M6 3.5 L9.5 7 L6 10.5" stroke="#C8C8C0" stroke-width="2" fill="none"/></svg>
<div style="position:absolute;left:0px;top:945px;width:1280px;height:29px;background:linear-gradient(to bottom,#FCFCFA,#F3F2EC 70%,#EDEBE2)"></div>
<div style="position:absolute;left:0px;top:972px;width:1280px;height:1px;background:#CFCBB9"></div>
<div style="position:absolute;left:4px;top:946px;width:61px;height:27px;background:linear-gradient(to bottom,#FDFDFB,#F4F3EE 70%,#ECEAE2);border:1px solid #9AAEC4;border-bottom:none;border-radius:3px 3px 0 0"></div><div class="t" style="left:30px;top:954px;">Charts</div>
<div style="position:absolute;left:70px;top:946px;width:90px;height:27px;background:linear-gradient(to bottom,#FDFDFB,#F4F3EE 70%,#ECEAE2);border:1px solid #9AAEC4;border-bottom:none;border-radius:3px 3px 0 0"></div><div class="t" style="left:96px;top:954px;">Notifications</div>
<svg style="left:8px;top:954px" width="16" height="14"><rect x="0.5" y="0.5" width="15" height="13" fill="#fff" stroke="#2050C0"/><rect x="0.5" y="0.5" width="15" height="2" fill="#2050C0"/><ellipse cx="8" cy="8.5" rx="5" ry="3.5" fill="#E05050"/><path d="M8 8.5 L13 8.5 A5 3.5 0 0 0 8 5 Z" fill="#60B040"/><path d="M8 8.5 L8 5 A5 3.5 0 0 0 3.5 7 Z" fill="#F0C040"/></svg>
<svg style="left:74px;top:952px" width="17" height="16"><path d="M1 7 L8.5 1 L16 7 V15 H1 Z" fill="#E8ECF4" stroke="#9AA8C8"/><rect x="4" y="5" width="9" height="6" fill="#FFF4B0"/><path d="M1 7 L8.5 12 L16 7" stroke="#9AA8C8" fill="#D4DCEC"/></svg>
<div style="position:absolute;left:0px;top:973px;width:1280px;height:21px;background:linear-gradient(to bottom,#E2E0D4,#ECE9D8 8px)"></div>
<div style="position:absolute;left:0px;top:973px;width:1280px;height:1px;background:#FAFAF6"></div>
<div style="position:absolute;left:0px;top:974px;width:1280px;height:1px;background:#ACA899"></div>
<svg style="left:4px;top:981px" width="18" height="8"><path d="M0.5 0.5 H17.5 V7.5 H0.5 Z" fill="#8A8A8A"/><path d="M1 1 L5 4 L1 7" fill="#C0C0C0"/></svg>
<div style="position:absolute;left:28px;top:978px;width:1px;height:15px;background:#C8C4B0"></div><div style="position:absolute;left:29px;top:978px;width:1px;height:15px;background:#fff"></div>
<div style="position:absolute;left:235px;top:976px;width:102px;height:18px;background:#fff;border:1px solid #7A7A7A;border-radius:3px"></div>
<div class="t" style="left:235px;top:979px;width:102px;text-align:center">0 %</div>
<div style="position:absolute;left:339px;top:976px;width:1px;height:18px;background:#C8C4B0"></div><div style="position:absolute;left:340px;top:976px;width:1px;height:18px;background:#fff"></div>
<div style="position:absolute;left:403px;top:976px;width:1px;height:18px;background:#C8C4B0"></div><div style="position:absolute;left:404px;top:976px;width:1px;height:18px;background:#fff"></div>
<div style="position:absolute;left:57px;top:69px;width:1221px;height:1px;background:#919B9C"></div>
<div style="position:absolute;left:57px;top:70px;width:1220px;height:1px;background:#FFFFFF"></div>
<div style="position:absolute;left:0px;top:69px;width:1px;height:541px;background:#919B9C"></div>
<div style="position:absolute;left:1px;top:71px;width:1px;height:538px;background:#FFFFFF"></div>
<div style="position:absolute;left:1277px;top:69px;width:1px;height:541px;background:#919B9C"></div>
<div style="position:absolute;left:1276px;top:70px;width:1px;height:539px;background:#FFFFFF"></div>
<div style="position:absolute;left:0px;top:609px;width:1278px;height:1px;background:#919B9C"></div>
<div style="position:absolute;left:1px;top:608px;width:1276px;height:1px;background:#FFFFFF"></div>
<div style="position:absolute;left:0px;top:612px;width:1278px;height:1px;background:#FAFAF5"></div>
<div style="position:absolute;left:1279px;top:613px;width:1px;height:360px;background:#CFCCBC"></div>
<div style="position:absolute;left:1279px;top:612px;width:1px;height:1px;background:#000"></div>
</body></html>
